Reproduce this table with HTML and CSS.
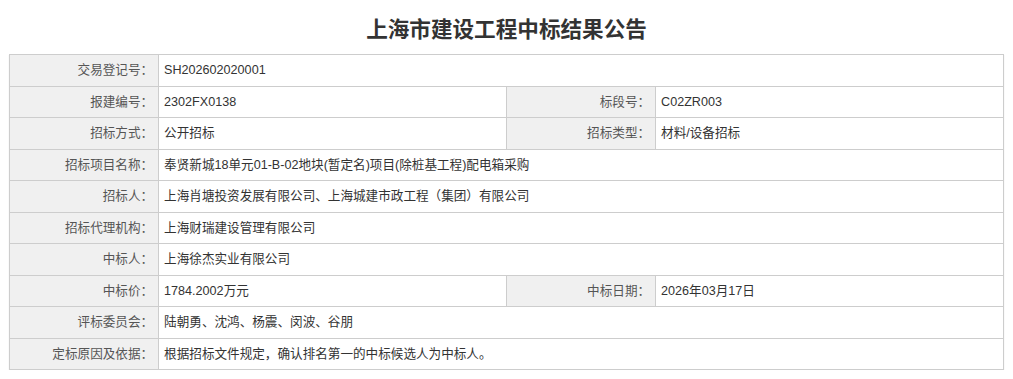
FILE: index.html
```html
<!DOCTYPE html>
<html lang="zh-CN">
<head>
<meta charset="utf-8">
<title>上海市建设工程中标结果公告</title>
<link rel="stylesheet" href="styles.css">
</head>
<body>
<div class="page">
  <h1 class="title">上海市建设工程中标结果公告</h1>
  <table class="info">
    <colgroup>
      <col class="c-label"><col class="c-value"><col class="c-label"><col class="c-value">
    </colgroup>
    <tbody>
      <tr><th>交易登记号：</th><td colspan="3">SH202602020001</td></tr>
      <tr><th>报建编号：</th><td>2302FX0138</td><th>标段号：</th><td>C02ZR003</td></tr>
      <tr><th>招标方式：</th><td>公开招标</td><th>招标类型：</th><td>材料/设备招标</td></tr>
      <tr><th>招标项目名称：</th><td colspan="3">奉贤新城18单元01-B-02地块(暂定名)项目(除桩基工程)配电箱采购</td></tr>
      <tr><th>招标人：</th><td colspan="3">上海肖塘投资发展有限公司、上海城建市政工程（集团）有限公司</td></tr>
      <tr><th>招标代理机构：</th><td colspan="3">上海财瑞建设管理有限公司</td></tr>
      <tr><th>中标人：</th><td colspan="3">上海徐杰实业有限公司</td></tr>
      <tr><th>中标价：</th><td>1784.2002万元</td><th>中标日期：</th><td>2026年03月17日</td></tr>
      <tr><th>评标委员会：</th><td colspan="3">陆朝勇、沈鸿、杨震、闵波、谷朋</td></tr>
      <tr><th>定标原因及依据：</th><td colspan="3">根据招标文件规定，确认排名第一的中标候选人为中标人。</td></tr>
    </tbody>
  </table>
</div>
</body>
</html>
```

FILE: styles.css
```css
html, body {
  margin: 0;
  padding: 0;
  background: #fff;
}
body {
  font-family: "Liberation Sans", "Noto Sans CJK SC", sans-serif;
  font-size: 12.6px;
  color: #333;
}
.page {
  padding: 0 9px;
}
.title {
  margin: 0;
  height: 54px;
  display: flex;
  align-items: center;
  justify-content: center;
  font-size: 21.6px;
  font-weight: bold;
  color: #333;
  font-family: "Noto Sans CJK SC", sans-serif;
}
.info {
  width: 100%;
  border-collapse: collapse;
  table-layout: fixed;
  box-shadow: 0 1px 1px rgba(0, 0, 0, 0.12);
}
.c-label { width: 15%; }
.c-value { width: 35%; }
.info th,
.info td {
  border: 1px solid #cdcdcd;
  line-height: 18.5px;
  padding: 6px 5px;
  text-align: left;
  font-weight: normal;
  white-space: nowrap;
}
.info th {
  background: #f0f0f0;
  color: #555;
  text-align: right;
  padding-right: 5px;
}
.info td {
  color: #333;
}
```
